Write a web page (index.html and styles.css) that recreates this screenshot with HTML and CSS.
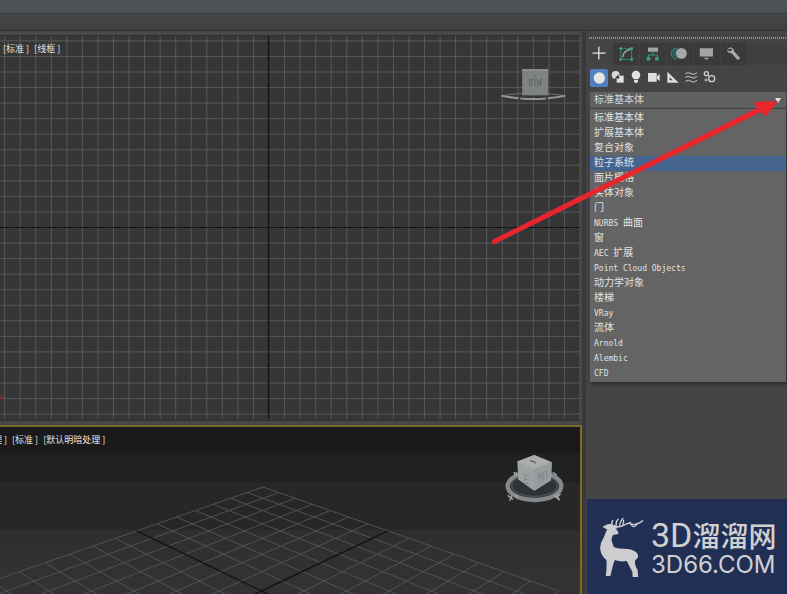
FILE: index.html
```html
<!DOCTYPE html>
<html lang="zh-CN">
<head>
<meta charset="utf-8">
<title>创建面板</title>
<link rel="stylesheet" href="styles.css">
</head>
<body>
<header class="toolbar"></header>
<div class="ribbon"></div>
<div class="workspace">
  <main class="viewports">
    <section class="viewport front" aria-label="线框视图">
      <svg class="canvas" id="front-grid" aria-hidden="true"></svg>
      <div class="labels"><button>[标准 ]</button><button>[线框 ]</button></div>
      <svg class="cube-front" viewBox="60 50 200 105" aria-hidden="true">
        <path d="M64 136q96-16 192 0" fill="none" stroke="#6c7070" stroke-width="3"/>
        <path d="M64 136q96 20 192 0" fill="none" stroke="#909494" stroke-width="6" stroke-dasharray="52 5 78 5"/>
        <path d="M126 57h78v78h-78z" fill="#7e8283"/>
        <path d="M126 57h78v4h-78z" fill="#969a9a"/>
        <path d="M148 84v24m0-18l14-4m-8 0v22m10-22v22m6-24l4 22 8-22v22M160 78l6-4" fill="none" stroke="#666a6b" stroke-width="4"/>
      </svg>
    </section>
    <section class="viewport perspective" aria-label="透视视图">
      <svg class="canvas" id="floor-grid" aria-hidden="true"></svg>
      <div class="labels clipped"><button>理 ]</button><button>[标准 ]</button><button>[默认明暗处理 ]</button></div>
      <svg class="cube-persp" viewBox="40 130 190 154" aria-hidden="true">
        <ellipse cx="135" cy="230" rx="81" ry="42" fill="#303336" stroke="#85888b" stroke-width="13"/>
        <ellipse cx="135" cy="228" rx="69" ry="33" fill="none" stroke="#484c50" stroke-width="5"/>
        <path d="M54 258l16 12m-2-14l-8 18m16-20l8 12M194 256l18 16m2-18l-16 12m8-12v18M72 188l10 10m0-10l-8 8M190 188l12 8" stroke="#a5a7a8" stroke-width="4" fill="none"/>
        <path d="M134 136l53 22-2 54-51 32-48-34-3-54z" fill="#9fa2a3"/>
        <path d="M134 136l53 22-53 20-51-22z" fill="#aaacad"/>
        <path d="M134 178l53-20-2 54-51 32z" fill="#999c9e"/>
        <path d="M121 153l12 3 6 5" fill="none" stroke="#5d6062" stroke-width="4"/>
        <path d="M100 190l12 10 8-6m-14 8v14m-8 2l20 6m-12-16l10 4M148 194v26m0-26l9-4v26m-9-14l9-3m6-12v26m0-26l9-4v24" fill="none" stroke="#828587" stroke-width="3"/>
      </svg>
    </section>
  </main>

  <aside class="panel">
    <div class="grip"></div>
    <nav class="tabs" aria-label="面板">
      <button class="tab active" aria-label="创建"><svg viewBox="16 40 81 66"><path d="M56 50v40M36 70h41" stroke="#e4e4e4" stroke-width="4"/></svg></button>
      <button class="tab" aria-label="修改"><svg viewBox="97 40 81 66"><path d="M121 56h34v34h-34z" fill="none" stroke="#3f9c91" stroke-width="3" stroke-dasharray="8 3"/><path d="M117 52h8v8h-8zM151 52h8v8h-8zM117 86h8v8h-8zM151 86h8v8h-8z" fill="#40a79b"/><path d="M127 84q2-22 24-25" fill="none" stroke="#a6adad" stroke-width="4"/></svg></button>
      <button class="tab" aria-label="层次"><svg viewBox="178 40 81 66"><path d="M203 53h31v13h-31z" fill="#a5a7a7"/><path d="M218 66v11m-14 6v-7h28v7" fill="none" stroke="#389b91" stroke-width="3"/><path d="M199 82h11v11h-11zM225 82h11v11h-11z" fill="#389b91"/></svg></button>
      <button class="tab" aria-label="运动"><svg viewBox="259 40 81 66"><circle cx="290" cy="71" r="15" fill="#28645f"/><path d="M289 55a17 17 0 0 0 0 34" fill="none" stroke="#3b9189" stroke-width="3"/><circle cx="304" cy="71" r="17" fill="#a7a9a9"/></svg></button>
      <button class="tab" aria-label="显示"><svg viewBox="340 40 81 66"><path d="M358 55h41v26h-41zM373 85h12v4h-12z" fill="#a4a6a6"/></svg></button>
      <button class="tab" aria-label="实用程序"><svg viewBox="421 40 81 66"><path d="M440 59l9-7q12 1 13 13l18 20q-1 7-8 6l-18-20q-13 0-14-11l8 5 6-3 1-6z" fill="#a9abab"/></svg></button>
    </nav>
    <div class="categories">
      <button class="active" aria-label="几何体"><svg viewBox="30 118 54 54"><circle cx="58" cy="145" r="17" fill="#e5e5e5"/></svg></button>
      <button aria-label="图形"><svg viewBox="84 118 54 54"><circle cx="107" cy="136" r="12" fill="#d7d7d7"/><path d="M110 138h21v21h-21z" fill="#e0e0e0"/><path d="M104 148l14-14" stroke="#444" stroke-width="3"/><circle cx="113" cy="143" r="5" fill="#444"/></svg></button>
      <button aria-label="灯光"><svg viewBox="138 118 54 54"><path d="M161 148q-6-6-6-12a13 13 0 0 1 26 0q0 6-6 12zM162 150h12v5l-3 5h-6l-3-5z" fill="#e2e2e2"/></svg></button>
      <button aria-label="摄影机"><svg viewBox="192 118 54 54"><path d="M204 130h26v26h-26zM231 140l8-8v23l-8-8z" fill="#dfdfdf"/></svg></button>
      <button aria-label="辅助对象"><svg viewBox="246 118 54 54"><path fill-rule="evenodd" d="M262 126l34 33h-34zM269 143v9h9z" fill="#dedede"/></svg></button>
      <button aria-label="空间扭曲"><svg viewBox="300 118 54 54"><path d="M316 132q9-6 17 0t18-3M316 143q9-6 17 0t18-3M316 155q9-6 17 0t18-3" fill="none" stroke="#c6c6c6" stroke-width="3"/></svg></button>
      <button aria-label="系统"><svg viewBox="354 118 54 54"><g fill="none" stroke="#d0d0d0"><circle cx="379" cy="132" r="6" stroke-width="4"/><circle cx="395" cy="147" r="9" stroke-width="4"/><circle cx="378" cy="151" r="3" stroke-width="3"/><path d="M384 136l5 5" stroke-width="3"/></g></svg></button>
    </div>
    <div class="picker">
      <select aria-label="对象类别"><option>标准基本体</option></select>
      <ul class="menu">
        <li><button>标准基本体</button></li>
        <li><button>扩展基本体</button></li>
        <li><button>复合对象</button></li>
        <li><button class="selected">粒子系统</button></li>
        <li><button>面片栅格</button></li>
        <li><button>实体对象</button></li>
        <li><button>门</button></li>
        <li><button><span class="latin">NURBS </span>曲面</button></li>
        <li><button>窗</button></li>
        <li><button><span class="latin">AEC </span>扩展</button></li>
        <li><button><span class="latin">Point Cloud Objects</span></button></li>
        <li><button>动力学对象</button></li>
        <li><button>楼梯</button></li>
        <li><button><span class="latin">VRay</span></button></li>
        <li><button>流体</button></li>
        <li><button><span class="latin">Arnold</span></button></li>
        <li><button><span class="latin">Alembic</span></button></li>
        <li><button><span class="latin">CFD</span></button></li>
      </ul>
    </div>
    <div class="brand">
      <svg class="deer" viewBox="56 80 134 178" aria-hidden="true">
        <path d="M66 109l14-7 8-2 12 4 14 22-1 4-15 3q-6 8-4 18l6 18q12 6 30 5 24 0 36 10 8 6 6 16l-9 10q0 18 8 27l2 27h-16l-2-22q-10-17-16-31-20 4-36-3l-5 14q-4 17-8 33h-14q4-24 2-47-16-14-18-31-3-16 9-34l11-26z" fill="#cdcdcf"/>
        <path d="M97 106q-6-8 0-16M101 106q16 6 30-2 12-10 20-4 18 6 35-9M107 106q-2-12 6-20M117 107q0-12 10-23M126 104q4-6 3-14M140 100l10-4M150 101q12 16 20-3M97 108l12 4" fill="none" stroke="#cdcdcf" stroke-width="4" stroke-linecap="round"/>
      </svg>
      <div class="brand-text">
        <div class="brand-name"><span class="brand-3d">3D</span>溜溜网</div>
        <div class="brand-url">3D66.COM</div>
      </div>
    </div>
  </aside>
</div>
<svg class="arrow" viewBox="0 0 294 150" aria-hidden="true"><path d="M2 145q0-2 2-3L267 11 264 5 288 4 276 19 271 15 5 147q-3 1-3-2z" fill="#e8262b"/></svg>
<script src="grid.js"></script>
</body>
</html>
```
FILE: styles.css
```css
* { box-sizing: border-box; }

body {
  margin: 0;
  height: 100vh;
  display: flex;
  flex-direction: column;
  overflow: hidden;
  background: #444;
  color: #e2e2e2;
  font: 10px/15px "Liberation Mono", "Noto Sans CJK SC", monospace;
}

button {
  margin: 0;
  padding: 0;
  border: 0;
  background: none;
  color: inherit;
  font: inherit;
}

svg { display: block; }

.toolbar {
  flex: 0 0 13px;
  background: #4c5255;
}

.ribbon {
  flex: 0 0 18px;
  border-top: 1px solid #36383a;
  border-bottom: 1px solid #303233;
  background: linear-gradient(#454648, #3e3f41);
}

.workspace {
  flex: 1;
  min-height: 0;
  display: flex;
}

.viewports {
  flex: 1;
  min-width: 0;
  display: flex;
  flex-direction: column;
  gap: 4px;
  padding-top: 4px;
  background: #484848;
}

.viewport {
  position: relative;
  overflow: hidden;
  min-height: 0;
}

.front {
  flex: 387;
  margin-right: 2px;
  border-top: 1px solid #303030;
  border-bottom: 1px solid #303030;
  background: #363636;
}

.perspective {
  flex: 168;
  border-top: 2px solid #7c6827;
  border-right: 2px solid #7c6827;
  background: linear-gradient(#1a1a1a 25px, #1f2120 27px 54px, #272727 56px 102px, #2d2f2f 104px, #333 170px);
}

.canvas {
  position: absolute;
  inset: 0;
  width: 100%;
  height: 100%;
}

.labels {
  position: absolute;
  top: 5px;
  left: 3px;
  display: flex;
  gap: 5px;
  font: 9px/15px "Noto Sans CJK SC", sans-serif;
  white-space: nowrap;
}

.clipped { left: -7px; }

.cube-front {
  position: absolute;
  top: 31px;
  right: 13px;
  width: 67px;
  height: 35px;
}

.cube-persp {
  position: absolute;
  top: 26px;
  right: 14px;
  width: 63px;
  height: 51px;
}

.panel {
  flex: 0 0 205px;
  display: flex;
  flex-direction: column;
  padding-top: 6px;
  border-left: 4px solid #393939;
  background: #444;
}

.grip {
  height: 2px;
  margin: 0 1px 4px 3px;
  border-top: 1px dotted #a0a0a0;
  border-bottom: 1px dotted #888;
}

.tabs {
  display: flex;
  height: 22px;
  background: #3f3f3f;
}

.tab {
  width: 27px;
  background: #3a3a3a;
  border-right: 1px solid #424242;
}

.tab svg { width: 26px; height: 22px; }
.tab.active { background: #444; }

.categories {
  display: flex;
  padding: 4px;
}

.categories svg { width: 18px; height: 18px; }

.categories .active {
  border-radius: 2px;
  background: #527fbe;
}

.picker {
  position: relative;
  margin: 1px 1px 0 4px;
}

.picker::after {
  content: "";
  position: absolute;
  top: 6px;
  right: 5px;
  border: 3px solid transparent;
  border-top: 5px solid #e4e4e4;
  border-bottom: 0;
}

select {
  display: block;
  width: 100%;
  height: 16px;
  padding: 0 4px;
  border: 0;
  border-radius: 0;
  appearance: none;
  background: #606060;
  color: #d8d8d8;
  font: inherit;
}

.menu {
  margin: 1px 0 0;
  padding: 2px 0 1px;
  list-style: none;
  background: #646464;
  box-shadow: 1px 2px 3px #292929;
}

.menu li { height: 15px; }

.menu button {
  display: block;
  width: 100%;
  height: 15px;
  padding-left: 4px;
  text-align: left;
  white-space: pre;
}

.menu .selected { background: #45658f; }

.latin { font: 8px/15px "DejaVu Sans Mono", monospace; }

.brand {
  display: flex;
  gap: 7px;
  height: 95px;
  margin-top: auto;
  margin-left: 1px;
  padding: 18px 8px 0 12px;
  background: #212f54;
  color: #d0d0d2;
}

.deer {
  flex: none;
  width: 45px;
  height: 60px;
}

.brand-text { white-space: nowrap; }

.brand-name {
  display: flex;
  align-items: center;
  height: 36px;
  font: 500 28px/36px "Noto Sans CJK SC", sans-serif;
}

.brand-3d { font: 34px/36px Roboto, sans-serif; }

.brand-url { font: 24px/24px Inter, sans-serif; }

.arrow {
  position: absolute;
  top: 97px;
  right: 3px;
  width: 294px;
  height: 150px;
}
```
FILE: grid.js
```js
const NS = "http://www.w3.org/2000/svg";

function line(svg, a, b, color, width) {
  const el = document.createElementNS(NS, "line");
  el.setAttribute("x1", a[0]);
  el.setAttribute("y1", a[1]);
  el.setAttribute("x2", b[0]);
  el.setAttribute("y2", b[1]);
  el.setAttribute("stroke", color);
  el.setAttribute("stroke-width", width);
  svg.appendChild(el);
}

// Orthographic grid with its two axes
const front = document.getElementById("front-grid");
const step = 15.55;
const origin = [269, 191.5];
for (let i = -17; i <= 20; i++) {
  const x = origin[0] + i * step;
  if (i) line(front, [x, 0], [x, 383], "#575959", 1);
}
for (let i = -12; i <= 12; i++) {
  const y = origin[1] + i * step;
  if (i) line(front, [0, y], [580, y], "#575959", 1);
}
line(front, [0, origin[1]], [580, origin[1]], "#161616", 1);
line(front, [268.5, 0], [268.5, 383], "#161616", 1.5);
line(front, [0, 360], [4, 363], "#a52424", 1);
line(front, [0, 363], [4, 360], "#a52424", 1);

// Floor plane in perspective: far corner, then left and right corners
const floor = document.getElementById("floor-grid");
const far = [263, 60, 1];
const weight = 0.731;
const right = [559 * weight, 164 * weight, weight];
const left = [-36 * weight, 164 * weight, weight];
function project(s, t) {
  const p = far.map((v, i) => v + s * (right[i] - v) + t * (left[i] - v));
  return [p[0] / p[2], p[1] / p[2]];
}
for (let i = 0; i <= 14; i++) {
  const k = i / 14;
  if (i === 7) continue;
  line(floor, project(k, 0), project(k, 1), "#505353", 1);
  line(floor, project(0, k), project(1, k), "#505353", 1);
}
line(floor, project(0.5, 0), project(0.5, 1), "#111", 1.3);
line(floor, project(0, 0.5), project(1, 0.5), "#111", 1.3);
```
